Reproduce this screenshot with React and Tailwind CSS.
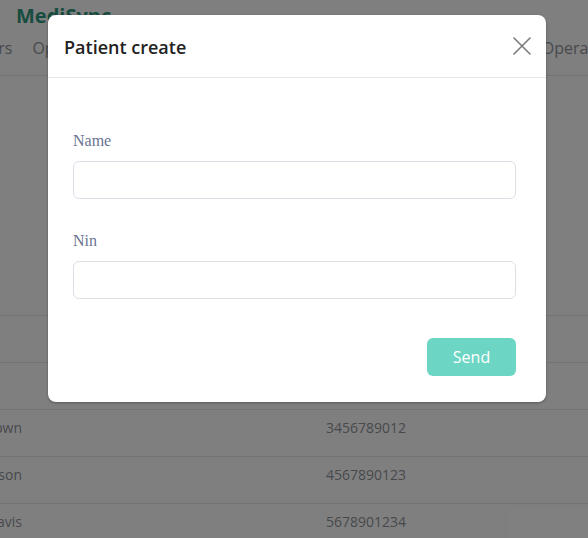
import React from 'react';

const ROWS = [
  { name: 'Michael Brown', nin: '3456789012' },
  { name: 'Emily Johnson', nin: '4567890123' },
  { name: 'Daniel Davis', nin: '5678901234' },
];

export default function App() {
  return (
    <div className="relative w-[588px] h-[538px] overflow-hidden bg-white" style={{ fontFamily: '"Open Sans", sans-serif' }}>
      {/* page behind the dialog */}
      <div className="h-[76px] border-b border-[#e4e7ed]">
        <div className="pl-4 pt-[2px] text-[20px] font-bold text-[#2f9a80] leading-[28px]">MediSync</div>
        <div className="flex gap-5 mt-[6px] ml-[-46px] text-[16px] text-[#909399] leading-[24px] whitespace-nowrap">
          <span>Doctors</span>
          <span>Operations</span>
          <span className="ml-[406px]">Operations</span>
        </div>
      </div>
      <div className="h-[239px]" />
      <div className="border-t border-[#e4e7ed]">
        <div className="h-[47px] border-b border-[#e4e7ed]" />
        <div className="h-[47px] border-b border-[#e4e7ed]" />
        {ROWS.map(r => (
          <div key={r.nin} className="h-[47px] border-b border-[#e4e7ed] flex text-[14px] text-[#909399] pt-[7px] whitespace-nowrap">
            <div className="w-[160px] ml-[-138px] text-right">{r.name}</div>
            <div className="ml-[304px]">{r.nin}</div>
          </div>
        ))}
      </div>

      {/* overlay */}
      <div className="absolute inset-0 bg-black/50">
        <div className="absolute left-[48px] top-[15px] w-[498px] h-[387px] bg-white rounded-lg shadow-[0_1px_3px_rgba(0,0,0,0.3)]">
          <div className="h-[63px] border-b border-[#e5e5e5] flex items-center justify-between pl-4 pr-[14px]">
            <h3 className="text-[18px] font-semibold text-[#222] leading-[24px] pt-[1px]">Patient create</h3>
            <button className="w-[20px] h-[20px] flex items-center justify-center">
              <svg width="18" height="18" viewBox="0 0 18 18" fill="none" stroke="#7a7a7a" strokeWidth="1.6" strokeLinecap="round">
                <path d="M1 1 L17 17 M17 1 L1 17" />
              </svg>
            </button>
          </div>
          <div className="pl-[25px] pr-[30px] pt-[53px]">
            <label className="block text-[16px] leading-[20px] text-[#6a7391]" style={{ fontFamily: '"Liberation Serif", serif' }}>Name</label>
            <input className="mt-[10px] block w-full h-[38px] border border-[#dcdfe6] rounded-md outline-none px-3 text-[14px]" />
            <label className="block mt-[32px] text-[16px] leading-[20px] text-[#6a7391]" style={{ fontFamily: '"Liberation Serif", serif' }}>Nin</label>
            <input className="mt-[10px] block w-full h-[38px] border border-[#dcdfe6] rounded-md outline-none px-3 text-[14px]" />
            <div className="flex justify-end mt-[39px]">
              <button className="w-[89px] h-[38px] rounded-md bg-[#6dd5c4] text-white text-[16px]">Send</button>
            </div>
          </div>
        </div>
      </div>
    </div>
  );
}
